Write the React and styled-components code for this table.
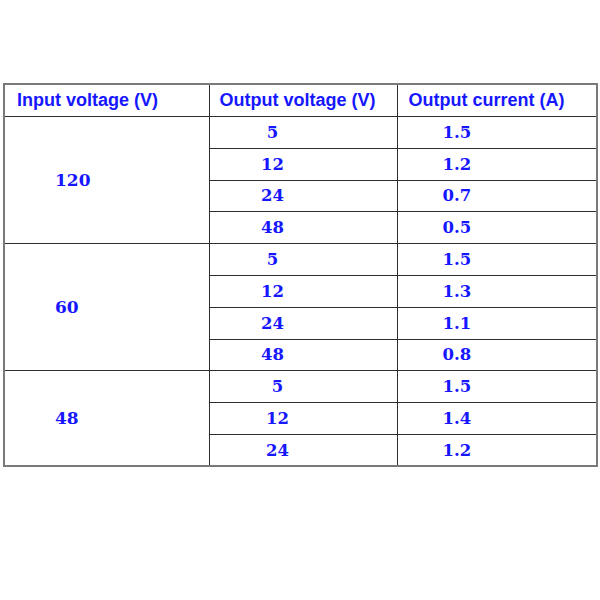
import React from "react";
import styled, { createGlobalStyle } from "styled-components";

const GlobalStyle = createGlobalStyle`
  html, body {
    margin: 0;
    padding: 0;
    background: #ffffff;
  }
`;

const Page = styled.div`
  width: 600px;
  height: 600px;
  padding: 83px 0 0 3px;
  box-sizing: border-box;
  background: #ffffff;
`;

const Table = styled.table`
  width: 593px;
  border-collapse: collapse;
  table-layout: fixed;
  border: 2px solid #7a7a7a;
  color: #1616ff;
`;

const HeadCell = styled.th`
  height: 31px;
  padding: 0 0 0 ${(props) => props.pad}px;
  border: 1px solid #2e2e2e;
  text-align: left;
  font-family: "Liberation Sans", Arial, sans-serif;
  font-weight: bold;
  font-size: 18px;
  white-space: nowrap;
  vertical-align: middle;
`;

const Row = styled.tr`
  height: 31.8px;
`;

const Cell = styled.td`
  padding: 0;
  border: 1px solid #2e2e2e;
  font-family: "DejaVu Serif", "Liberation Serif", serif;
  font-weight: bold;
  font-size: 16.5px;
  vertical-align: middle;
  white-space: nowrap;
`;

const InputCell = styled(Cell)`
  padding-left: 50px;
  font-size: 17px;
`;

const Num = styled.span`
  display: inline-block;
  width: 40px;
  text-align: center;
  margin-left: ${(props) => props.offset}px;
`;

const Current = styled.span`
  display: inline-block;
  margin-left: 45px;
`;

const groups = [
  {
    input: "120",
    shift: 43,
    rows: [
      ["5", "1.5"],
      ["12", "1.2"],
      ["24", "0.7"],
      ["48", "0.5"],
    ],
  },
  {
    input: "60",
    shift: 43,
    rows: [
      ["5", "1.5"],
      ["12", "1.3"],
      ["24", "1.1"],
      ["48", "0.8"],
    ],
  },
  {
    input: "48",
    shift: 48,
    rows: [
      ["5", "1.5"],
      ["12", "1.4"],
      ["24", "1.2"],
    ],
  },
];

const App = () => {
  return (
    <Page>
      <GlobalStyle />
      <Table>
        <colgroup>
          <col style={{ width: 205 }} />
          <col style={{ width: 188 }} />
          <col style={{ width: 200 }} />
        </colgroup>
        <thead>
          <tr>
            <HeadCell pad={12}>Input voltage (V)</HeadCell>
            <HeadCell pad={10}>Output voltage (V)</HeadCell>
            <HeadCell pad={11}>Output current (A)</HeadCell>
          </tr>
        </thead>
        <tbody>
          {groups.map((group) =>
            group.rows.map(([voltage, current], i) => (
              <Row key={group.input + voltage}>
                {i === 0 && (
                  <InputCell rowSpan={group.rows.length}>{group.input}</InputCell>
                )}
                <Cell>
                  <Num offset={group.shift}>{voltage}</Num>
                </Cell>
                <Cell>
                  <Current>{current}</Current>
                </Cell>
              </Row>
            ))
          )}
        </tbody>
      </Table>
    </Page>
  );
};

export default App;
